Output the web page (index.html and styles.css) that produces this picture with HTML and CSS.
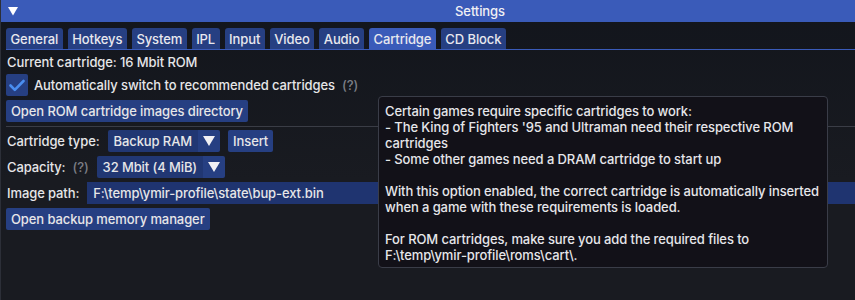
FILE: index.html
```html
<!DOCTYPE html>
<html lang="en">
<head>
  <meta charset="UTF-8">
  <title>Settings</title>
  <link rel="stylesheet" href="styles.css">
</head>
<body>

<div class="window">
  <!-- Title bar -->
  <div class="titlebar">
    <svg class="collapse" width="10" height="9" viewBox="0 0 10 9"><polygon points="0,0 10,0 5,8.5" fill="#ffffff"/></svg>
    <span class="title">Settings</span>
    <span></span>
  </div>

  <div class="body">
    <!-- Tabs -->
    <div class="tabbar">
      <span class="tab">General</span>
      <span class="tab">Hotkeys</span>
      <span class="tab">System</span>
      <span class="tab">IPL</span>
      <span class="tab">Input</span>
      <span class="tab">Video</span>
      <span class="tab">Audio</span>
      <span class="tab active">Cartridge</span>
      <span class="tab">CD Block</span>
    </div>

    <div class="content">
      <div class="row text-row">Current cartridge: 16 Mbit ROM</div>

      <div class="row">
        <span class="checkbox">
          <svg width="16" height="13" viewBox="0 0 16 13"><polyline points="1.5,6.5 5.8,10.8 14.5,2" fill="none" stroke="#4a8ef0" stroke-width="2.6" stroke-linecap="round" stroke-linejoin="round"/></svg>
        </span>
        <span class="label">Automatically switch to recommended cartridges</span>
        <span class="help">(?)</span>
      </div>

      <div class="row">
        <span class="button">Open ROM cartridge images directory</span>
      </div>

      <div class="separator"></div>

      <div class="row">
        <span class="label">Cartridge type:</span>
        <span class="combo"><span class="combo-value">Backup RAM</span><span class="combo-arrow"></span></span>
        <span class="button">Insert</span>
      </div>

      <div class="row">
        <span class="label">Capacity:</span>
        <span class="help">(?)</span>
        <span class="combo"><span class="combo-value">32 Mbit (4 MiB)</span><span class="combo-arrow"></span></span>
      </div>

      <div class="row">
        <span class="label">Image path:</span>
        <span class="input">F:\temp\ymir-profile\state\bup-ext.bin</span>
      </div>

      <div class="row">
        <span class="button">Open backup memory manager</span>
      </div>
    </div>
  </div>

  <!-- Tooltip for the (?) marker -->
  <div class="tooltip">
    <p>Certain games require specific cartridges to work:<br>
    - The King of Fighters '95 and Ultraman need their respective ROM<br>cartridges<br>
    - Some other games need a DRAM cartridge to start up</p>
    <p>With this option enabled, the correct cartridge is automatically inserted<br>when a game with these requirements is loaded.</p>
    <p>For ROM cartridges, make sure you add the required files to<br>F:\temp\ymir-profile\roms\cart\.</p>
  </div>
</div>

</body>
</html>
```

FILE: styles.css
```css
/* Reset */
html, body {
  margin: 0;
  padding: 0;
  height: 100%;
  overflow: hidden;
  background: #17191f;
}

.window {
  position: relative;
  width: 952px;
  height: 300px;
  font-family: 'Inter', 'Noto Sans', sans-serif;
  font-size: 13px;
  font-weight: 500;
  letter-spacing: -0.1px;
  color: #e6e6e8;
  background: linear-gradient(#12151c, #191b21 60%);
  border-left: 1px solid #2c2f38;
  box-sizing: border-box;
}

/* Title bar */
.titlebar {
  height: 22px;
  background: #3a5bb9;
  display: grid;
  grid-template-columns: 1fr auto 1fr;
  align-items: center;
  padding-left: 7px;
}

.collapse {
  display: block;
}

.title {
  color: #f0f0f4;
}

/* Tabs */
.body {
  padding: 6px 0 0 5px;
}

.tabbar {
  display: flex;
  gap: 5px;
  height: 21px;
  border-bottom: 1px solid #3a5bb9;
}

.tab {
  display: flex;
  align-items: center;
  padding: 0 4.5px;
  background: #263f82;
  border-radius: 3px 3px 0 0;
  color: #e8e8ee;
}

.tab.active {
  background: #3a5bb9;
}

/* Rows */
.content {
  display: flex;
  flex-direction: column;
  gap: 4px;
  padding-top: 4px;
}

.row {
  display: flex;
  align-items: center;
  gap: 8px;
  height: 22px;
}

.text-row {
  height: 16px;
  padding-left: 1px;
}

.label {
  padding-left: 1px;
}

.help {
  color: #7c7e86;
  margin-left: -1px;
}

.checkbox {
  width: 22px;
  height: 22px;
  background: #263f82;
  border-radius: 2px;
  display: flex;
  align-items: center;
  justify-content: center;
  margin-right: -3px;
}

.checkbox svg {
  display: block;
}

.button {
  height: 22px;
  display: flex;
  align-items: center;
  padding: 0 5px;
  background: #263f82;
  border-radius: 2px;
}

.separator {
  height: 1px;
  background: #3a3d46;
  margin: 0 0 -1px 0;
}

.combo {
  display: flex;
  height: 22px;
  border-radius: 2px;
  overflow: hidden;
}

.combo-value {
  display: flex;
  align-items: center;
  padding: 0 6px;
  background: #213773;
}

.combo-arrow {
  width: 22px;
  background: #263f82;
  position: relative;
}

.combo-arrow::after {
  content: "";
  position: absolute;
  left: 5px;
  top: 6px;
  border-left: 6px solid transparent;
  border-right: 6px solid transparent;
  border-top: 10px solid #f0f0f4;
}

.input {
  flex: 1;
  height: 22px;
  display: flex;
  align-items: center;
  padding: 0 6px;
  background: #1f3470;
}

/* Tooltip */
.tooltip {
  position: absolute;
  left: 377px;
  top: 96px;
  width: 450px;
  height: 172px;
  box-sizing: border-box;
  padding: 6px 6px;
  background: #121118;
  border: 1px solid #3a3d48;
  border-radius: 4px;
  line-height: 16px;
  color: #e6e6ea;
  white-space: nowrap;
  overflow: hidden;
}

.tooltip p {
  margin: 0 0 16px 0;
}
```
